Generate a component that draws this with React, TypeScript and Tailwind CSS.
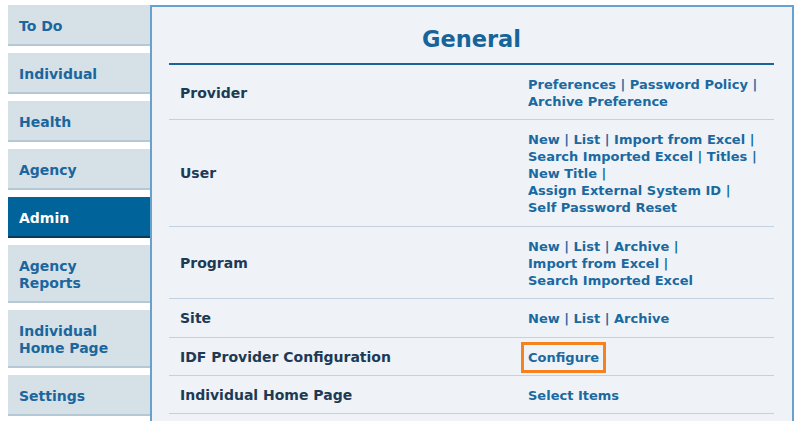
const tabs: { label: string[]; active?: boolean }[] = [
  { label: ["To Do"] },
  { label: ["Individual"] },
  { label: ["Health"] },
  { label: ["Agency"] },
  { label: ["Admin"], active: true },
  { label: ["Agency", "Reports"] },
  { label: ["Individual", "Home Page"] },
  { label: ["Settings"] },
];

type Row = { name: string; lines: string[][]; highlight?: boolean };

const rows: Row[] = [
  { name: "Provider", lines: [["Preferences", "Password Policy", ""], ["Archive Preference"]] },
  {
    name: "User",
    lines: [
      ["New", "List", "Import from Excel", ""],
      ["Search Imported Excel", "Titles", ""],
      ["New Title", ""],
      ["Assign External System ID", ""],
      ["Self Password Reset"],
    ],
  },
  {
    name: "Program",
    lines: [["New", "List", "Archive", ""], ["Import from Excel", ""], ["Search Imported Excel"]],
  },
  { name: "Site", lines: [["New", "List", "Archive"]] },
  { name: "IDF Provider Configuration", lines: [["Configure"]], highlight: true },
  { name: "Individual Home Page", lines: [["Select Items"]] },
];

function LinkLine({ items, highlight }: { items: string[]; highlight?: boolean }) {
  return (
    <div className="whitespace-nowrap">
      {items.map((item, i) => (
        <span key={i}>
          {i > 0 && <span>{i === items.length - 1 && item === "" ? " |" : " | "}</span>}
          {item !== "" && (
            <a
              href="#"
              className={
                highlight
                  ? "inline-block outline-3 outline-[#f5811f] outline-offset-4"
                  : ""
              }
            >
              {item}
            </a>
          )}
        </span>
      ))}
    </div>
  );
}

export default function App() {
  return (
    <div
      className="flex h-[421px] overflow-hidden bg-white pl-[8px] pt-[5px] font-bold"
      style={{ fontFamily: '"DejaVu Sans", Verdana, sans-serif' }}
    >
      {/* Sidebar tabs */}
      <nav className="w-[142px] shrink-0">
        {tabs.map((t) => (
          <div
            key={t.label.join(" ")}
            className={
              "mb-[7px] border-b-2 pb-[9.5px] pl-[11px] pt-[12.5px] text-[14px] leading-[17px] " +
              (t.active
                ? "border-[#0b3b5b] bg-[#00639a] text-white"
                : "border-[#b5c8d6] bg-[#d6e0e7] text-[#1b669d]")
            }
          >
            {t.label.map((l) => (
              <div key={l}>{l}</div>
            ))}
          </div>
        ))}
      </nav>

      {/* Main panel */}
      <main className="mr-[6px] flex-1 border-2 border-b-0 border-[#67a2cf] bg-[#eff3f7] pl-[17px] pr-[18px]">
        <h1 className="border-b-2 border-[#17649a] pb-[9px] pt-[17px] text-center text-[22.5px] leading-[30px] text-[#17649a]">
          General
        </h1>
        {rows.map((r) => (
          <div
            key={r.name}
            className="grid grid-cols-[359px_1fr] items-center border-b border-[#c3d2de] pb-[9.4px] pt-[11px]"
          >
            <div className="pl-[11px] text-[14px] leading-[17px] text-[#1d3a55]">{r.name}</div>
            <div className="text-[13px] leading-[17px] text-[#1a69a0]">
              {r.lines.map((line, i) => (
                <LinkLine key={i} items={line} highlight={r.highlight} />
              ))}
            </div>
          </div>
        ))}
      </main>
    </div>
  );
}
